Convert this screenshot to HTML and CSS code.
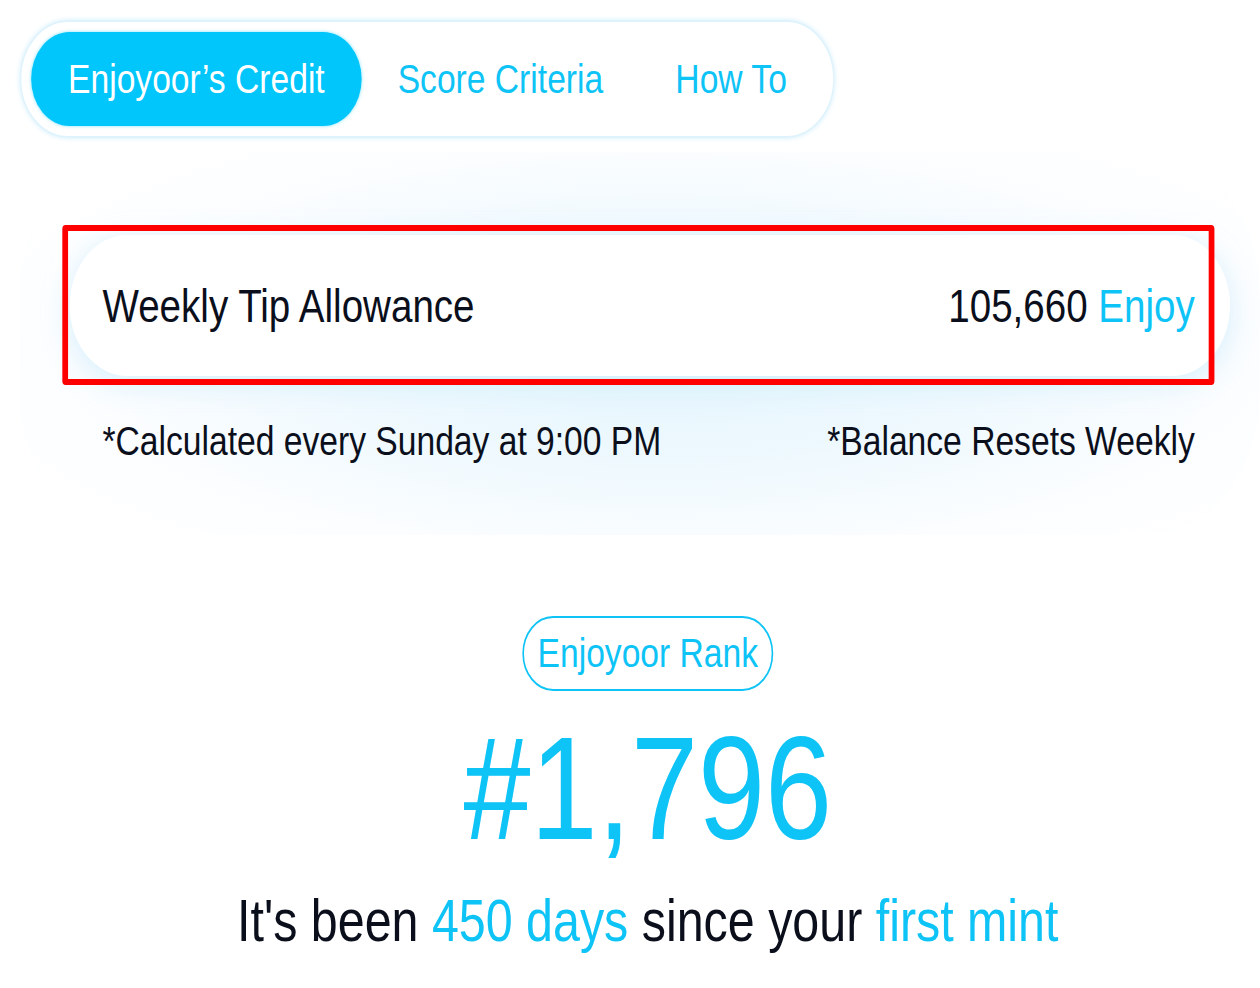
FILE: index.html
```html
<!DOCTYPE html>
<html>
  <head>
    <title>Enjoyoor's Credit</title>
    <link rel="stylesheet" href="styles.css">
  </head>
  <body>
    <div class="page">
      <nav class="tabs">
        <a class="tab active">Enjoyoor’s Credit</a>
        <a class="tab">Score Criteria</a>
        <a class="tab">How To</a>
      </nav>

      <section class="panel">
        <div class="allowance">
          <span class="label">Weekly Tip Allowance</span>
          <span class="amount">105,660 <span class="accent">Enjoy</span></span>
        </div>
        <div class="notes">
          <span>*Calculated every Sunday at 9:00 PM</span>
          <span>*Balance Resets Weekly</span>
        </div>
        <div class="highlight"></div>
      </section>

      <section class="rank">
        <div class="rank-badge">Enjoyoor Rank</div>
        <div class="rank-value">#1,796</div>
        <p class="since">It's been <span class="accent">450 days</span> since your <span class="accent">first mint</span></p>
      </section>
    </div>
  </body>
</html>
```

FILE: styles.css
```css
:root {
  --cyan: #00c6fc;
  --cyan-text: #0ec3f6;
  --text: #0b0f1c;
}

html,
body {
  margin: 0;
  padding: 0;
  background: #ffffff;
  overflow: hidden;
}

body {
  font-family: "Liberation Sans", Arial, sans-serif;
  color: var(--text);
  width: 1260px;
  height: 988px;
}

/* the app is drawn narrow: lay it out wide, then squeeze horizontally */
.page {
  position: relative;
  width: 1536px;
  padding: 20px 0 0 24px;
  box-sizing: border-box;
  transform: scaleX(0.82);
  transform-origin: 0 0;
}

/* Tabs */
.tabs {
  display: inline-flex;
  align-items: center;
  padding: 10px 12px;
  border: 2px solid #dff3fc;
  border-radius: 60px;
  box-shadow: 0 0 6px rgba(180, 228, 250, 0.6);
}

.tab {
  display: inline-flex;
  align-items: center;
  height: 94px;
  padding: 0 44px;
  font-size: 41px;
  color: var(--cyan-text);
  border-radius: 50px;
}

.tab.active {
  background: var(--cyan);
  color: #ffffff;
  padding: 0 45px;
  box-shadow: 0 0 4px rgba(0, 198, 252, 0.5);
}

/* Allowance panel */
.panel {
  position: relative;
  margin: 14px 0 0 0;
  padding: 83px 36px 70px 61px;
  border-radius: 140px;
  background: radial-gradient(ellipse 62% 70% at 52% 52%, #e3f5fd 0%, #eff9fe 45%, #fbfdff 75%, #ffffff 100%);
}

.allowance {
  display: flex;
  justify-content: space-between;
  align-items: center;
  height: 141px;
  padding: 0 43px 0 40px;
  background: #ffffff;
  border-radius: 80px;
  box-shadow: 0 6px 30px rgba(200, 234, 250, 0.7);
  font-size: 47px;
}

.accent {
  color: var(--cyan-text);
}

.notes {
  display: flex;
  justify-content: space-between;
  padding: 41px 43px 0 40px;
  font-size: 41px;
  line-height: 48px;
}

/* annotation box */
.highlight {
  position: absolute;
  left: 52px;
  top: 73px;
  width: 1391px;
  height: 148px;
  border-style: solid;
  border-color: #ff0000;
  border-width: 6px 7px;
  border-radius: 4px;
}

/* Rank */
.rank {
  display: flex;
  flex-direction: column;
  align-items: center;
  padding: 81px 0 0 20px;
}

.rank-badge {
  display: flex;
  align-items: center;
  height: 71px;
  padding: 0 17px;
  border: 2px solid var(--cyan-text);
  border-radius: 40px;
  font-size: 41px;
  color: var(--cyan-text);
}

.rank-value {
  font-size: 147px;
  line-height: 150px;
  margin-top: 22px;
  color: var(--cyan-text);
}

.since {
  margin: 24px 0 0 0;
  font-size: 59px;
  line-height: 68px;
}
```
